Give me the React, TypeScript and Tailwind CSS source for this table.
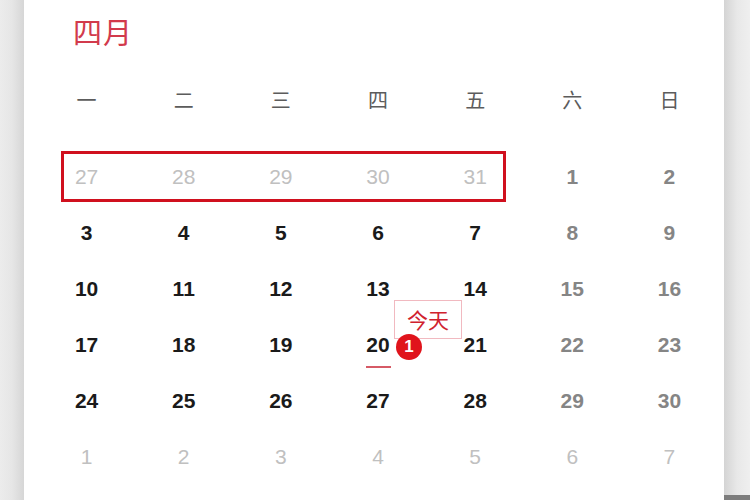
// Month calendar card – April view with "today" marker

import React from 'react';

type Tone = 'main' | 'weekend' | 'faded';

interface DayCell {
  label: string;
  tone: Tone;
}

const WEEKDAYS = ['一', '二', '三', '四', '五', '六', '日'];

const buildWeeks = (): DayCell[][] => {
  const rows: number[][] = [
    [27, 28, 29, 30, 31, 1, 2],
    [3, 4, 5, 6, 7, 8, 9],
    [10, 11, 12, 13, 14, 15, 16],
    [17, 18, 19, 20, 21, 22, 23],
    [24, 25, 26, 27, 28, 29, 30],
    [1, 2, 3, 4, 5, 6, 7],
  ];
  return rows.map((row, r) =>
    row.map((n, c) => {
      let tone: Tone = c >= 5 ? 'weekend' : 'main';
      if (r === 0 && c < 5) tone = 'faded';
      if (r === 5) tone = 'faded';
      return { label: String(n), tone };
    })
  );
};

const toneClass: Record<Tone, string> = {
  main: 'text-[#1a1a1a] font-bold',
  weekend: 'text-[#858585] font-bold',
  faded: 'text-[#c0c0c0] font-normal',
};

export default function App() {
  const weeks = buildWeeks();

  return (
    <div
      className="w-[750px] h-[500px] flex bg-white overflow-hidden"
      style={{ fontFamily: '"Liberation Sans", "Noto Sans CJK SC", sans-serif' }}
    >
      {/* left shadow strip */}
      <div className="w-[24px] h-full bg-gradient-to-r from-[#ececec] via-[#e6e6e6] to-[#d6d6d6]" />

      {/* card */}
      <div className="flex-1 h-full bg-white pl-[14px]">
        {/* title */}
        <div className="h-[64px] flex items-center pl-[35px]">
          <span
            className="text-[29px] text-[#d23a4c] tracking-[1px]"
            style={{ fontFamily: '"Noto Sans CJK SC", sans-serif' }}
          >
            四月
          </span>
        </div>

        {/* weekday header */}
        <div className="w-[680px] h-[72px] grid grid-cols-7 items-center">
          {WEEKDAYS.map(d => (
            <div
              key={d}
              className="text-center text-[20px] text-[#5c5c5c]"
              style={{ fontFamily: '"Noto Sans CJK SC", sans-serif' }}
            >
              {d}
            </div>
          ))}
        </div>

        <div className="h-[13px]" />

        {/* day grid */}
        <div className="relative w-[680px]">
          {weeks.map((week, r) => (
            <div key={r} className="h-[56px] grid grid-cols-7 items-center">
              {week.map((day, c) => (
                <div key={c} className={`text-center text-[21px] ${toneClass[day.tone]}`}>
                  {day.label}
                </div>
              ))}
            </div>
          ))}

          {/* highlighted previous-month range */}
          <div className="absolute left-[23px] top-[2px] w-[445px] h-[51px] border-[3px] border-[#d0101e]" />

          {/* today label */}
          <div
            className="absolute left-[356px] top-[151px] w-[68px] h-[39px] border border-[#f1b9c0] bg-white/80 flex items-center justify-center text-[21px] text-[#d0222e]"
            style={{ fontFamily: '"Noto Sans CJK SC", sans-serif' }}
          >
            今天
          </div>

          {/* underline under 20 */}
          <div className="absolute left-[328px] top-[217px] w-[25px] h-[2px] bg-[#d65a66]" />

          {/* badge */}
          <div className="absolute left-[358px] top-[185px] w-[26px] h-[26px] rounded-full bg-[#e0141c] flex items-center justify-center text-white text-[17px] font-bold">
            1
          </div>
        </div>
      </div>

      {/* right shadow strip */}
      <div className="w-[26px] h-full flex flex-col bg-gradient-to-r from-[#d4d4d4] via-[#e8e8e8] to-[#efefef]">
        <div className="flex-1" />
        <div className="h-[5px] bg-[#7d7d7d]" />
      </div>
    </div>
  );
}
